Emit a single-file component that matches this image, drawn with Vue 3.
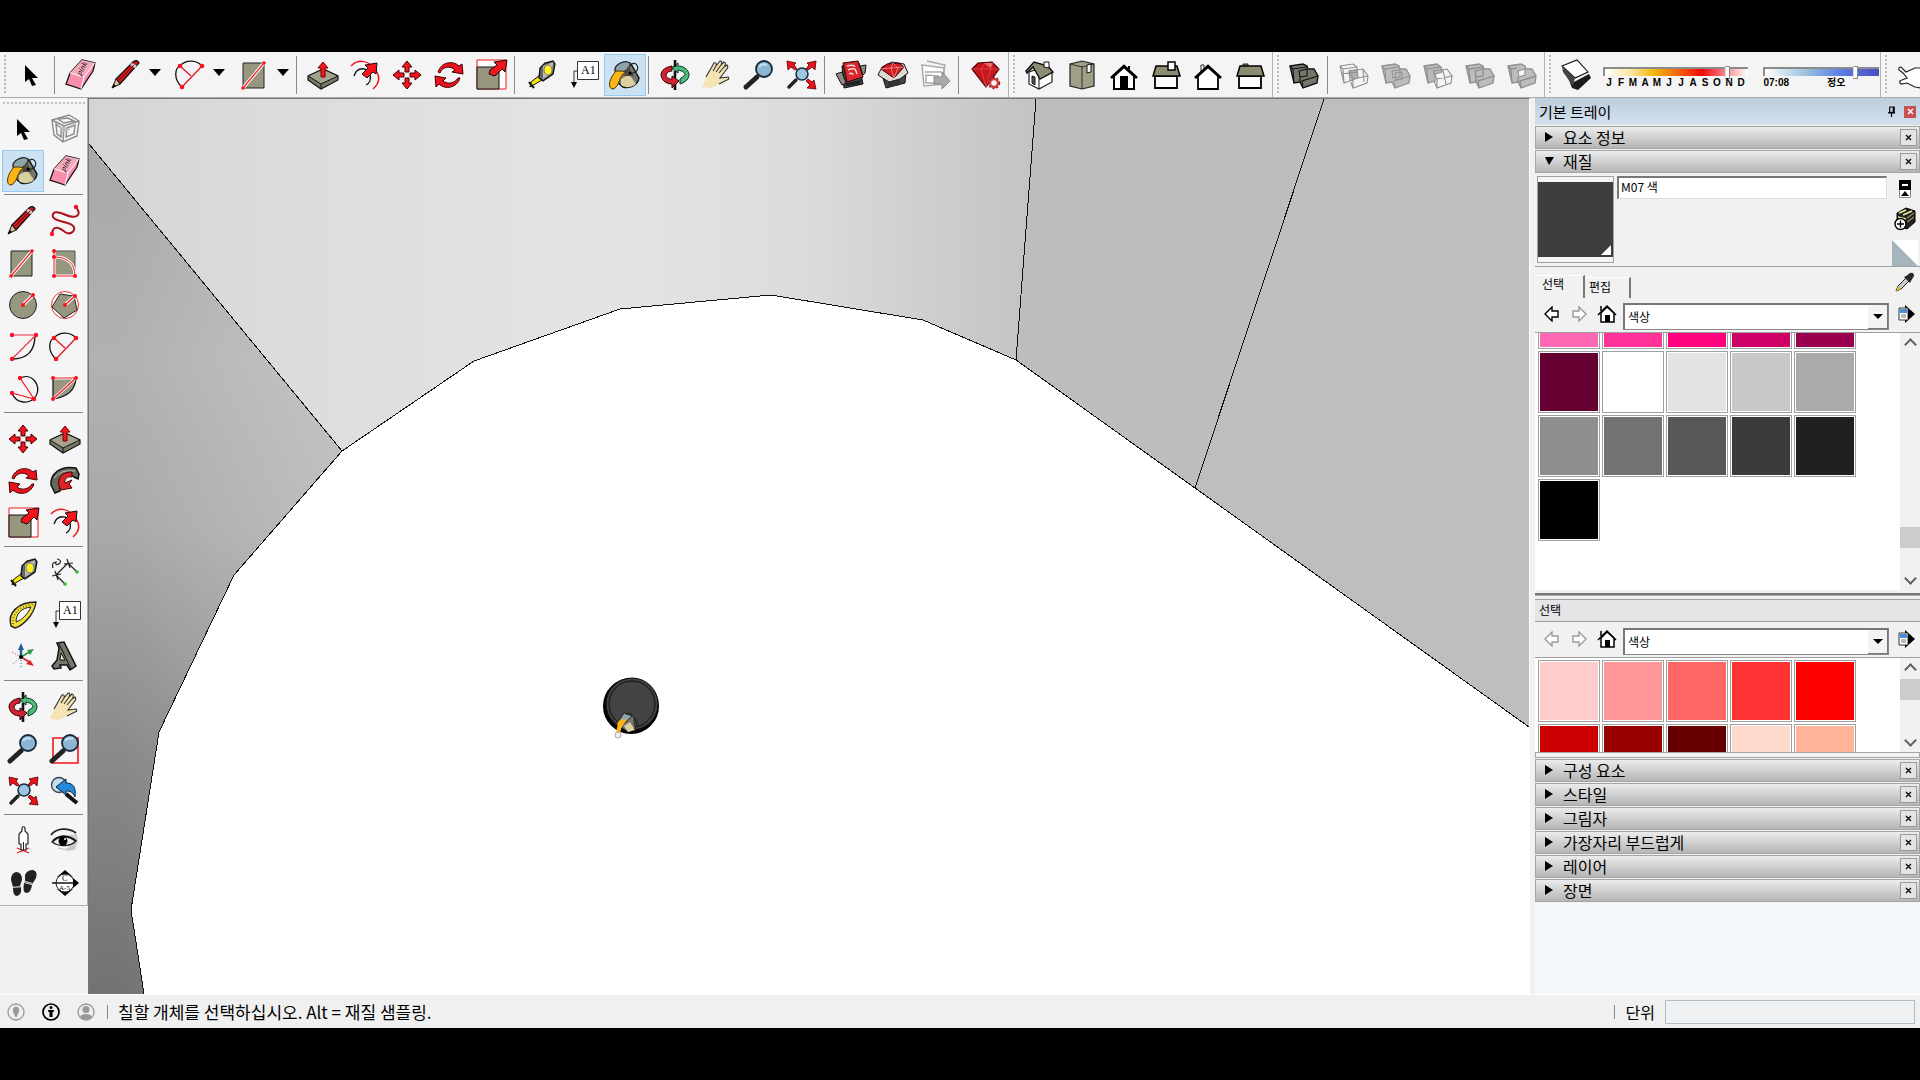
<script setup>
import { ref } from 'vue'

const edit = [
  { id: 'push', label: 'Push/Pull' }, { id: 'offset', label: 'Offset' }, { id: 'move', label: 'Move' },
  { id: 'rotate', label: 'Rotate' }, { id: 'scale', label: 'Scale' }, { sep: true },
  { id: 'tape', label: 'Tape Measure' }, { id: 'label', label: 'Text' }, { id: 'bucket', label: 'Paint Bucket', on: true }, { sep: true },
  { id: 'orbit', label: 'Orbit' }, { id: 'hand', label: 'Pan' }, { id: 'zoom', label: 'Zoom' }, { id: 'extents', label: 'Zoom Extents' }, { sep: true },
  { id: 'warehouse', label: '3D Warehouse' }, { id: 'extwarehouse', label: 'Extension Warehouse' }, { id: 'layout', label: 'Send to LayOut' }, { sep: true },
  { id: 'ruby', label: 'Extension Manager' }
]
const draw = [{ id: 'pencil', label: 'Line' }, { id: 'arc', label: 'Arc' }, { id: 'rect', label: 'Rectangle' }]
const views = [
  { id: 'iso', label: 'Iso' }, { id: 'top', label: 'Top' }, { id: 'front', label: 'Front' },
  { id: 'right', label: 'Right' }, { id: 'back', label: 'Back' }, { id: 'left', label: 'Left' }
]
const solids = [
  { id: 'intersect', label: 'Intersect' }, { id: 'union', label: 'Union' }, { id: 'subtract', label: 'Subtract' },
  { id: 'trim', label: 'Trim' }, { id: 'split', label: 'Split' }
]
const palette = [
  ['cursor', 'component', 'bucket', 'eraser'],
  ['pencil', 'freehand', 'rect', 'rrect', 'circle', 'polygon', 'arc2', 'arc', 'arc3', 'pie'],
  ['move', 'push', 'rotate', 'follow', 'scale', 'offset'],
  ['tape', 'dimension', 'protractor', 'label', 'axes', 'text3d'],
  ['orbit', 'hand', 'zoom', 'zoomwin', 'extents', 'previous'],
  ['person', 'eye', 'feet', 'section']
]
const months = 'JFMAMJJASOND'.split('')
const mainColors = [
  '#ff69b4', '#ff3399', '#ff007f', '#cc0066', '#99004d',
  '#660033', '#ffffff', '#e3e3e3', '#c8c8c8', '#aaaaaa',
  '#8e8e8e', '#727272', '#575757', '#3b3b3b', '#202020', '#000000'
]
const subColors = ['#ffcccc', '#ff9999', '#ff6666', '#ff3333', '#ff0000', '#cc0000', '#990000', '#660000', '#ffd9cc', '#ffb399']
const sections = ['구성 요소', '스타일', '그림자', '가장자리 부드럽게', '레이어', '장면']
const material = ref('M07 색')
const month = ref(87)
const hour = ref(81)
</script>

<template>
  <svg class="sprite" aria-hidden="true">
    <defs>
      <symbol id="cursor" viewBox="0 0 42 42"><path d="M15 11V28L19 25 22 32 26 31 22 24 28 24z" /></symbol>
      <symbol id="eraser" viewBox="0 0 42 42">
        <path d="M22 6 35 9 33 17 21 35 6 30 10 19z" fill="#f98fac" stroke="#111" stroke-width="1.3" />
        <path d="M22 6 35 9 24 23 10 19z" fill="#f6a9bd" /><path d="M10 19 24 23 21 35M24 23 35 9" fill="none" stroke="#fff" />
        <text x="18" y="21" font-size="8" font-family="Liberation Serif" font-style="italic" transform="rotate(-62 20 19)">pink</text>
      </symbol>
      <symbol id="pencil" viewBox="0 0 42 42">
        <path d="M10 25 27 8Q31 5 33 9L14 30z" fill="#d0171c" stroke="#111" stroke-width="1.3" /><path d="M6 34 10 25 14 30z" fill="#d8c28e" stroke="#111" />
        <path d="M25 10 30 13" stroke="#ccc" stroke-width="3" /><path d="M12 27 28 11" stroke="#6f0a0d" /><path d="M6 34 8 30 10 32z" />
      </symbol>
      <symbol id="arc" viewBox="0 0 42 42">
        <path d="M12 33C3 25 5 14 10 12 16 5 27 6 32 12" fill="none" stroke="#111" stroke-width="1.3" /><path d="M12 33 32 12M10 12 21 22" stroke="#e01624" stroke-width="1.3" />
        <g fill="#f5141e"><circle cx="12" cy="33" r="2.3" /><circle cx="32" cy="12" r="2.3" /><circle cx="10" cy="12" r="2.3" /></g>
      </symbol>
      <symbol id="rect" viewBox="0 0 42 42">
        <path d="M9 9H30V34H9z" fill="#97967e" stroke="#222" /><path d="M9 34 30 9" stroke="#fff" stroke-width="3.4" /><path d="M9 34 30 9" stroke="#f5141e" stroke-width="1.2" />
        <g fill="#f5141e"><circle cx="9" cy="34" r="1.8" /><circle cx="30" cy="9" r="1.8" /></g>
      </symbol>
      <symbol id="push" viewBox="0 0 42 42">
        <path d="M6 22 21 15 36 22V26L19 35 6 26z" fill="#7b7a67" stroke="#111" stroke-width="1.2" /><path d="M6 22 21 15 36 22 19 30z" fill="#a3a28c" stroke="#111" />
        <path d="M19 30V35" stroke="#111" /><path d="M21 8 26 14H23V23H19V14H16z" fill="#f5141e" stroke="#700" />
      </symbol>
      <symbol id="offset" viewBox="0 0 42 42">
        <path d="M7 12C14 5 23 6 30 14 36 21 37 28 29 35" fill="none" stroke="#f5141e" stroke-width="1.5" /><path d="M10 22C13 12 24 13 26 21 27 25 26 29 22 31" fill="none" stroke="#111" stroke-width="1.3" />
        <path d="M33 9 32 20 29 18 23 24 18 20 24 14 21 11z" fill="#f5141e" stroke="#111" />
      </symbol>
      <symbol id="move" viewBox="0 0 42 42">
        <path d="M21 7 26 13H23V18H19V13H16zM21 35 26 29H23V24H19V29H16zM7 21 13 16V19H18V23H13V26zM35 21 29 16V19H24V23H29V26z" fill="#f5141e" stroke="#400" />
      </symbol>
      <symbol id="rotate" viewBox="0 0 42 42">
        <path d="M10 18C13 8 25 6 31 12L34 10 35 20 24 18 27 16C22 11 14 13 12 19z" fill="#e8131d" stroke="#400" /><path d="M32 24C29 34 17 36 11 30L8 33 7 22 18 24 15 27C20 31 27 29 30 24z" fill="#e8131d" stroke="#400" />
      </symbol>
      <symbol id="scale" viewBox="0 0 42 42">
        <path d="M7 6H36V35H7z" fill="#fff" stroke="#f5141e" /><path d="M7 13H29V35H7z" fill="#97967e" stroke="#111" /><path d="M37 6 35 18 32 15 25 22 19 20 20 16 27 11 24 8z" fill="#f5141e" stroke="#111" />
      </symbol>
      <symbol id="tape" viewBox="0 0 42 42">
        <path d="M20 21 11 28 10 33 22 26z" fill="#f4e400" stroke="#111" /><path d="M20 14 25 9 33 7 35 10 33 20 23 27 19 24z" fill="#666" stroke="#111" stroke-width="1.3" />
        <path d="M23 12 33 8 32 19 23 25z" fill="#b9b9b9" /><ellipse cx="28" cy="16" rx="4" ry="5" fill="#fff21c" stroke="#777" /><path d="M9 28 14 34" stroke="#111" stroke-width="2" />
      </symbol>
      <symbol id="label" viewBox="0 0 42 42">
        <path d="M15.500 7.500H36.500V25.500H15.500z" fill="#fff" stroke="#333" /><text x="19" y="20" font-size="12" font-family="Liberation Serif">A1</text>
        <path d="M15 17H12V30" fill="none" stroke="#333" /><path d="M9 28H15L12 34z" />
      </symbol>
      <symbol id="bucket" viewBox="0 0 42 42">
        <path d="M12 14 27 10 35 24C34 31 26 35 19 33L14 29z" fill="#77766a" stroke="#111" stroke-width="1.400" /><path d="M17 25 25 20 32 30C27 34 21 34 17 31z" fill="#d9cf9f" />
        <path d="M11 17C10 11 20 5 26 9 27 14 20 19 15 19z" fill="#8da3a8" stroke="#222" stroke-width="1.3" /><path d="M24 12 30 22 20 22z" fill="#4b4b45" />
        <path d="M12 17C17 17 20 17 22 18 15 20 16 33 9 35 4 35 4 26 12 17z" fill="#fdb515" stroke="#4d3400" />
        <path d="M26 11C32 6 36 13 32 18L26 20" fill="none" stroke="#222" stroke-width="1.2" /><circle cx="26" cy="19" r="1.5" />
      </symbol>
      <symbol id="orbit" viewBox="0 0 42 42">
        <path d="M18 12C12 13 7 16 7 21 8 28 14 30 18 30V34L25 27 18 22V25C14 25 12 23 12 21 13 18 15 17 18 17z" fill="#cf2233" stroke="#300" /><path d="M24 12V9L18 14 24 19V16C29 17 31 19 31 21L26 25 26 30C32 28 35 25 35 20 34 15 29 12 24 12z" fill="#4fb97a" stroke="#032" />
        <path d="M21 6V13M21 17V24M21 30V36" stroke="#111" stroke-width="2.6" />
      </symbol>
      <symbol id="hand" viewBox="0 0 42 42">
        <path d="M6 33 12 19 18 9Q21 8 20 12L24 7Q27 7 25 11L28 8Q31 9 28 13L31 11Q33 13 30 16L25 23 32 23Q34 25 31 26L23 30 15 34z" fill="#f5e2b5" /><path d="M10 23 18 9Q21 8 20 12L17 17M20 12 24 7Q27 7 25 11L20 18M25 11 28 8Q31 9 28 13L23 19M28 13 31 11Q33 13 30 16L24 24 32 23Q34 25 31 26L23 30" fill="none" stroke="#333" stroke-width="1.1" />
      </symbol>
      <symbol id="zoom" viewBox="0 0 42 42">
        <path d="M8 33 19 23" stroke="#222" stroke-width="5" stroke-linecap="round" /><circle cx="26" cy="15" r="8" fill="#8db6d4" stroke="#16293b" stroke-width="1.8" /><path d="M21 13Q24 9 29 11" stroke="#c7e2f4" stroke-width="2" fill="none" />
      </symbol>
      <symbol id="extents" viewBox="0 0 42 42">
        <path d="M9 33 16 26" stroke="#222" stroke-width="3.500" stroke-linecap="round" /><circle cx="22" cy="20" r="6" fill="#9cc5e2" stroke="#16293b" stroke-width="1.5" />
        <path d="M7 7 16 9 14 11 17 15 15 16 11 13 8 16zM36 7 27 9 29 11 26 15 28 16 32 13 35 16zM36 35 34 26 32 28 28 25 26 27 30 31 27 34z" fill="#e8131d" stroke="#500" stroke-width=".8" />
      </symbol>
      <symbol id="warehouse" viewBox="0 0 42 42">
        <path d="M12 12 29 9 33 30 14 34z" fill="#444" stroke="#111" /><path d="M6 20 12 18 16 29 12 31z" fill="#8f8c85" stroke="#111" /><path d="M13 9 28 7 33 23 17 28z" fill="#d9272c" stroke="#300" />
        <path d="M17 12Q24 10 25 13M18 16Q25 13 26 17L27 20M19 20Q22 18 23 21" fill="none" stroke="#ffd9d6" stroke-width="1.4" /><path d="M30 12 36 11 35 19 33 21z" fill="#8f8c85" stroke="#111" /><path d="M16 29 31 26 30 30 16 32z" fill="#222" />
      </symbol>
      <symbol id="extwarehouse" viewBox="0 0 42 42">
        <path d="M11 24 14 34 33 29 34 18z" fill="#444" stroke="#111" /><path d="M10 13 6 21 17 28 28 25 36 19 32 10 20 8z" fill="#dedbd4" stroke="#111" /><path d="M9 15 15 10 27 9 32 13 22 24z" fill="#cf1b21" stroke="#300" />
        <path d="M9 15 19 14 32 13M19 14 22 24 26 14 21 9 19 14" fill="none" stroke="#f79a98" stroke-width=".8" /><path d="M16 28 28 25V31L16 33z" fill="#333" />
      </symbol>
      <symbol id="layout" viewBox="0 0 42 42">
        <path d="M8 11 30 14V30L10 32z" fill="#fff" stroke="#aaa" stroke-width="1.5" /><path d="M13 7 31 11 28 27M11 18H28M12 21 24 22V29H12z" fill="none" stroke="#aaa" stroke-width="1.5" /><path d="M20 23H28V18L36 27 28 35V30H20z" fill="#aaa" stroke="#888" />
      </symbol>
      <symbol id="ruby" viewBox="0 0 42 42">
        <path d="M8 15 14 9 28 8 35 15 22 33z" fill="#c9151c" stroke="#400" stroke-width="1.2" /><path d="M8 15 17 15 35 15M17 15 22 33 27 15 21 9 17 15" fill="none" stroke="#e04a4a" stroke-width=".8" /><path d="M20 9 29 9 27 14z" fill="#ee6868" />
        <circle cx="30" cy="29" r="4" fill="#f4f4f4" stroke="#d63a3f" stroke-width="2.4" /><circle cx="30" cy="29" r="5.500" fill="none" stroke="#8e2326" stroke-width="1.5" stroke-dasharray="2 2" />
      </symbol>
      <symbol id="iso" viewBox="0 0 42 42">
        <path d="M10 18V30L20 35 33 28V18L28 12z" fill="#fff" stroke="#222" stroke-width="1.2" /><path d="M7 17 15 8 29 12 34 18 21 25 14 13 8 19z" fill="#8d8c73" stroke="#111" stroke-width="1.4" /><path d="M20 24V35M13 22 16 23V31L13 29z" stroke="#111" fill="#555" /><path d="M25 8H30V14L25 13z" fill="#fff" stroke="#111" />
      </symbol>
      <symbol id="top" viewBox="0 0 42 42">
        <path d="M9 10 21 7 33 10V32L21 35 9 32z" fill="#a09f87" stroke="#222" stroke-width="1.2" /><path d="M21 12V35M9 10 21 13 33 10" fill="none" stroke="#333" /><path d="M26 11 30 10V18L26 19z" fill="#fff" stroke="#111" />
      </symbol>
      <symbol id="front" viewBox="0 0 42 42"><path d="M11 22V35H31V22L21 13z" fill="#fff" stroke="#000" stroke-width="2" /><path d="M8 24 21 12 34 24" fill="none" stroke="#000" stroke-width="2.6" /><path d="M17 22H25V35H17z" /><path d="M25 12H27V15H25z" /></symbol>
      <symbol id="right" viewBox="0 0 42 42"><path d="M10 22H32V34H10z" fill="#fff" stroke="#000" stroke-width="1.800" /><path d="M11 12H32L35 22H8z" fill="#8d8c73" stroke="#000" stroke-width="1.5" /><path d="M23 8H30V16H23z" fill="#fff" stroke="#000" stroke-width="1.5" /></symbol>
      <symbol id="back" viewBox="0 0 42 42"><path d="M14 18V11H17V15" fill="#fff" stroke="#222" /><path d="M11 22V35H31V22L21 13z" fill="#fff" stroke="#000" stroke-width="1.800" /><path d="M8 24 21 12 34 24" fill="none" stroke="#000" stroke-width="2.6" /></symbol>
      <symbol id="left" viewBox="0 0 42 42"><path d="M14 10H19V13H14z" fill="#777" stroke="#222" /><path d="M10 22H32V34H10z" fill="#fff" stroke="#000" stroke-width="1.800" /><path d="M11 12H32L35 22H8z" fill="#8d8c73" stroke="#000" stroke-width="1.5" /></symbol>
      <symbol id="shell" viewBox="0 0 42 42"><path d="M7 12 20 10 24 12 25 15 31 15 35 22 34 29 20 34 17 28 11 29z" fill="#77766a" stroke="#111" stroke-width="1.400" /><path d="M7 12 10 15 24 13M10 15 11 29M16 17 24 15V22L17 23zM17 23V28M20 34 19 27 35 22" fill="none" stroke="#111" stroke-width="1.100" /></symbol>
      <symbol id="intersect" viewBox="0 0 42 42"><path d="M16 16 25 15 25 24 18 26z" fill="#b0b0b0" /><path d="M7 12 20 10 24 13 25 24 11 29zM7 12 10 15 24 13M10 15 11 29M16 17 30 15 35 22 34 29 20 34 17 26zM16 17 20 25 35 22M20 25V34M30 15 31 28M8 20 24 18" fill="none" stroke="#8f8f8f" stroke-width="1.1" /></symbol>
      <symbol id="union" viewBox="0 0 42 42"><path d="M7 12 20 10 24 12 25 15 31 15 35 22 34 29 20 34 17 28 11 29z" fill="#bcbcbc" stroke="#919191" stroke-width="1.300" /><path d="M7 12 10 15 24 13M10 15 11 29M17 17 25 16V23L18 24zM20 19 27 18V25L21 26zM20 34 19 27 35 22" fill="none" stroke="#8f8f8f" /></symbol>
      <symbol id="subtract" viewBox="0 0 42 42"><path d="M7 12 20 10 24 13 25 18 18 20 18 27 11 29z" fill="#b8b8b8" stroke="#919191" stroke-width="1.300" /><path d="M7 12 10 15 24 13M10 15 11 29M16 17 30 15 35 22 34 29 20 34 17 27M20 25 35 22M20 25V34M26 16 29 30M16 17 20 25" fill="none" stroke="#8f8f8f" stroke-width="1.100" /></symbol>
      <symbol id="trim" viewBox="0 0 42 42"><path d="M7 12 20 10 24 12 25 15 31 15 35 22 34 29 20 34 17 28 11 29z" fill="#bcbcbc" stroke="#919191" stroke-width="1.300" /><path d="M7 12 10 15 24 13M10 15 11 29M16 17 24 15V22L17 23zM17 23V28M20 34 19 27 35 22" fill="none" stroke="#888" stroke-width="1.200" /></symbol>
      <symbol id="split" viewBox="0 0 42 42"><path d="M7 12 20 10 24 12 25 15 31 15 35 22 34 29 20 34 17 28 11 29z" fill="#bcbcbc" stroke="#919191" stroke-width="1.300" /><path d="M17 17 24 15V21L18 23z" fill="#f6f6f6" stroke="#888" /><path d="M7 12 10 15 16 14M10 15 11 29M17 23V28M20 34 19 27 35 22" fill="none" stroke="#888" stroke-width="1.200" /></symbol>
      <symbol id="shadow" viewBox="0 0 42 42"><path d="M9 13 19 28 34 20 36 24 23 36 17 34z" fill="#1a1a1a" /><path d="M7 12 22 6 33 18 20 24z" fill="#fff" stroke="#111" stroke-width="1.1" /><path d="M7 12 20 24 18 32 8 18z" fill="#444" /></symbol>
      <symbol id="gesture" viewBox="0 0 42 42"><path d="M30 34 24 33 16 29 10 30Q7 27 11 26L16 24 12 19 8 16Q7 13 10 13L15 18 24 14 34 14V34z" fill="#fff" stroke="#222" stroke-width="1.200" /></symbol>
      <symbol id="component" viewBox="0 0 42 42"><path d="M8 12 25 7 35 13 33 28 19 34 10 27zM8 12 20 18 35 13M20 18 19 34M12 16 13 26 17 29 17 20zM23 20 31 17 30 26 22 29zM14 11 24 10 30 13 20 15z" fill="none" stroke="#8b8b8b" stroke-width="1.4" /><path d="M15 18 27 21 18 25z" fill="#bbb" /></symbol>
      <symbol id="freehand" viewBox="0 0 42 42"><path d="M8 34C9 24 16 28 21 32 27 36 34 29 28 25 22 21 12 22 9 17 7 10 16 12 22 15 31 19 39 16 32 7" fill="none" stroke="#a81218" stroke-width="2" /><circle cx="8" cy="34" r="2.2" fill="#f5141e" /><circle cx="32" cy="7" r="2.2" fill="#f5141e" /></symbol>
      <symbol id="rrect" viewBox="0 0 42 42"><path d="M10 9H31V34H10z" fill="#97967e" stroke="#555" /><path d="M10 9V34H31C31 22 24 15 10 15" fill="none" stroke="#fff" stroke-width="3" /><path d="M10 9V34H31C31 22 24 15 10 15" fill="none" stroke="#f5141e" /><g fill="#f5141e"><circle cx="10" cy="9" r="2" /><circle cx="10" cy="15" r="2" /><circle cx="10" cy="34" r="2" /><circle cx="31" cy="34" r="2" /></g></symbol>
      <symbol id="circle" viewBox="0 0 42 42"><circle cx="21" cy="21" r="13.500" fill="#97967e" stroke="#222" /><path d="M21 21 31 11" stroke="#fff" stroke-width="3.500" /><path d="M21 21 31 11" stroke="#f5141e" stroke-width="1.3" /><g fill="#f5141e"><circle cx="21" cy="21" r="2" /><circle cx="31" cy="11" r="2" /></g></symbol>
      <symbol id="polygon" viewBox="0 0 42 42"><circle cx="21" cy="21" r="13.500" fill="#fff" stroke="#e33" /><path d="M8 23 16 10 30 12 33 26 20 34z" fill="#97967e" stroke="#222" /><path d="M21 21 31 12" stroke="#fff" stroke-width="3.500" /><path d="M21 21 31 12" stroke="#f5141e" stroke-width="1.3" /><g fill="#f5141e"><circle cx="21" cy="21" r="2" /><circle cx="31" cy="12" r="2" /></g></symbol>
      <symbol id="arc2" viewBox="0 0 42 42"><path d="M10 33Q33 33 33 9" fill="none" stroke="#111" stroke-width="1.300" /><path d="M10 9H34L10 33" fill="none" stroke="#e3344a" stroke-width="1.2" /><g fill="#f5141e"><circle cx="10" cy="9" r="2.200" /><circle cx="34" cy="9" r="2.200" /><circle cx="10" cy="33" r="2.200" /></g></symbol>
      <symbol id="arc3" viewBox="0 0 42 42"><path d="M18 10C30 4 40 18 34 28 28 37 14 36 10 25" fill="none" stroke="#111" stroke-width="1.3" /><path d="M18 10 32 31 10 25" fill="none" stroke="#f5141e" stroke-width="1.2" /><g fill="#f5141e"><circle cx="18" cy="10" r="2.200" /><circle cx="32" cy="31" r="2.200" /><circle cx="10" cy="25" r="2.200" /></g></symbol>
      <symbol id="pie" viewBox="0 0 42 42"><path d="M9 10H32Q31 28 9 31z" fill="#97967e" stroke="#111" stroke-width="1.200" /><path d="M9 31 32 10H9" fill="none" stroke="#fff" stroke-width="3" /><path d="M9 31 32 10H9" fill="none" stroke="#f5141e" stroke-width="1.2" /><g fill="#f5141e"><circle cx="9" cy="10" r="2" /><circle cx="32" cy="10" r="2" /><circle cx="9" cy="31" r="2" /></g></symbol>
      <symbol id="follow" viewBox="0 0 42 42"><path d="M7 25C6 14 16 5 32 8L35 14 34 19 30 17C24 12 16 17 16 31L11 33z" fill="#66665a" stroke="#111" stroke-width="1.5" /><path d="M10 18Q17 9 31 11" fill="none" stroke="#bbb" /><path d="M15 26C13 17 19 12 28 12L28 17C23 16 20 19 21 23L28 20 25 24 28 28 17 30z" fill="#e0232a" stroke="#400" /></symbol>
      <symbol id="dimension" viewBox="0 0 42 42"><path d="M9 16Q7 11 12 10 11 15 16 11 18 8 13 7M12 23 24 11M11 19 14 28M8 24 17 22M23 7 26 16M20 12 29 11M25 12 32 19M13 24 20 31" fill="none" stroke="#222" stroke-width="1.200" /><g fill="#3cb531"><circle cx="33" cy="20" r="1.800" /><circle cx="21" cy="32" r="1.800" /></g></symbol>
      <symbol id="protractor" viewBox="0 0 42 42"><path d="M34 8C16 8 5 19 9 32L13 34C20 32 32 22 34 8z" fill="#f2de3a" stroke="#222" stroke-width="1.400" /><path d="M14 28C14 20 19 14 29 13 25 21 20 26 14 28z" fill="#f5f5f5" stroke="#222" /><path d="M11 30C10 20 17 12 31 10.500" fill="none" stroke="#7d6e10" stroke-dasharray="1 2" stroke-width="2" /></symbol>
      <symbol id="axes" viewBox="0 0 42 42"><path d="M19 21V11" stroke="#225d9d" stroke-width="2.500" /><path d="M19 7 22 14H16z" fill="#225d9d" /><path d="M19 21 29 15" stroke="#2f9c45" stroke-width="2" /><path d="M32 13 28 19 25 14z" fill="#2f9c45" /><path d="M19 21 29 27" stroke="#d22" stroke-width="2" /><path d="M32 30 24 28 28 24z" fill="#d22" /><path d="M19 21V33M19 21 11 28" stroke="#369" stroke-dasharray="1 2" /><path d="M19 21 10 16" stroke="#d22" stroke-dasharray="1 2" /><circle cx="19" cy="21" r="2" /></symbol>
      <symbol id="text3d" viewBox="0 0 42 42"><path d="M13 7 20 6 32 30 26 34 23 29H16L17 32 10 33 8 30 13 24 15 12z" fill="#77766b" stroke="#111" stroke-width="1.500" /><path d="M15 8 19 16 27 33" fill="none" stroke="#111" /><path d="M17 17 21 24H16z" fill="#eee" stroke="#111" /></symbol>
      <symbol id="zoomwin" viewBox="0 0 42 42"><path d="M9 10H34V35H9z" fill="none" stroke="#f5141e" stroke-width="1.600" /><use href="#zoom" /></symbol>
      <symbol id="previous" viewBox="0 0 42 42"><circle cx="15" cy="15" r="7.500" fill="#c4ddec" stroke="#345" stroke-width="1.300" /><path d="M22 24 33 33" stroke="#111" stroke-width="4" /><path d="M12 17 22 9V13C30 13 32 18 31 27 29 22 26 21 22 21V25z" fill="#2489d8" stroke="#123" /></symbol>
      <symbol id="person" viewBox="0 0 42 42"><path d="M15 33 27 28M27 33 15 28" stroke="#f5141e" stroke-width="1.300" /><path d="M20 8Q21.500 5 23 8L23 11 26 14 26 24H24L24 30H19V24H17V14L20 11z" fill="#fff" stroke="#222" stroke-width="1.200" /><path d="M21.500 22V30" stroke="#222" /></symbol>
      <symbol id="eye" viewBox="0 0 42 42"><path d="M7 15C12 8 24 7 32 13" fill="none" stroke="#222" stroke-width="1.800" /><path d="M24 15 33 14 34 21 31 30 22 31 25 26 31 22z" fill="#ccc" /><path d="M8 22C14 15 23 14 32 21 26 27 15 27 8 22z" fill="#eee" stroke="#222" stroke-width="1.300" /><path d="M9 21C14 16 23 14 32 21" fill="none" stroke="#111" stroke-width="2" /><circle cx="19" cy="21" r="4.500" /><circle cx="21" cy="19" r="1" fill="#fff" /><path d="M14 28Q22 31 30 27" fill="none" stroke="#bbb" /></symbol>
      <symbol id="feet" viewBox="0 0 42 42"><path d="M9 18Q9 11 14 10 20 10 20 18L18 24 11 25zM11 26 19 25Q20 33 15 34 11 34 11 26zM23 13Q25 8 31 8 36 9 34 16L31 21 23 19zM22 21 30 23Q29 30 25 31 20 31 22 21z" fill="#222" /><path d="M11 25H19M22 20 31 22" stroke="#888" /></symbol>
      <symbol id="section" viewBox="0 0 42 42"><path d="M21 8 29 15H13zM21 34 29 27H13z" /><circle cx="21" cy="21" r="9" fill="#fff" stroke="#222" /><path d="M8 21H34" stroke="#111" stroke-width="1.500" /><path d="M29 16 35 21 29 26z" /><text x="18" y="19" font-size="8" font-family="Liberation Serif">C</text><text x="15" y="28" font-size="7" font-family="Liberation Serif">A-5</text></symbol>
      <symbol id="arrowL" viewBox="0 0 16 16"><path d="M1 8 8 1V5H14V11H8V15z" fill="#fff" stroke="currentColor" stroke-width="1.400" /></symbol>
      <symbol id="home" viewBox="0 0 20 20"><path d="M4 9V18H17V9L10 3z" fill="#fff" stroke="#000" stroke-width="1.500" /><path d="M1 11 10 2 19 11M4 7V2" fill="none" stroke="#000" stroke-width="1.500" /><path d="M8 11H13V18H8z" /></symbol>
      <symbol id="details" viewBox="0 0 18 18"><path d="M7 0 17 9 7 18z" /><path d="M1 3H10V15H1z" fill="#fff" stroke="#333" /><path d="M2 4H9V8H2z" fill="#4a8edb" /><path d="M3 10H8M3 12H8" stroke="#777" /><path d="M10 4 16 9 10 14z" /></symbol>
    </defs>
  </svg>

  <div class="app">
    <header class="toolbar">
      <div class="group first">
        <i class="grip"></i>
        <button class="tool" aria-label="Select"><svg><use href="#cursor" /></svg></button>
        <i class="sep"></i>
        <div class="splits">
          <button class="tool" aria-label="Eraser"><svg><use href="#eraser" /></svg></button>
          <div v-for="d in draw" :key="d.id" class="splitbtn">
            <button class="tool" :aria-label="d.label"><svg><use :href="'#' + d.id" /></svg></button>
            <button class="drop" :aria-label="d.label + ' menu'"></button>
          </div>
        </div>
        <i class="sep"></i>
        <template v-for="(t, i) in edit" :key="i">
          <i v-if="t.sep" class="sep"></i>
          <button v-else class="tool" :class="{ on: t.on }" :aria-label="t.label"><svg><use :href="'#' + t.id" /></svg></button>
        </template>
      </div>
      <div class="group">
        <i class="grip"></i>
        <button v-for="t in views" :key="t.id" class="tool" :aria-label="t.label"><svg><use :href="'#' + t.id" /></svg></button>
      </div>
      <div class="group">
        <i class="grip"></i>
        <button class="tool" aria-label="Outer Shell"><svg><use href="#shell" /></svg></button>
        <i class="sep"></i>
        <button v-for="t in solids" :key="t.id" class="tool" :aria-label="t.label"><svg><use :href="'#' + t.id" /></svg></button>
      </div>
      <div class="group shadows">
        <i class="grip"></i>
        <button class="tool" aria-label="Shadows"><svg><use href="#shadow" /></svg></button>
        <label class="slider date">
          <input v-model="month" type="range" aria-label="Date" />
          <span class="months"><b v-for="(m, i) in months" :key="i">{{ m }}</b></span>
        </label>
        <label class="slider time">
          <input v-model="hour" type="range" aria-label="Time" />
          <span class="hours"><b>07:08</b><b>정오</b></span>
        </label>
      </div>
      <div class="group last">
        <i class="grip"></i>
        <button class="tool" aria-label="Interact"><svg><use href="#gesture" /></svg></button>
      </div>
    </header>

    <main class="main">
      <aside class="palette">
        <i class="hgrip"></i>
        <div v-for="(g, i) in palette" :key="i" class="pgroup">
          <button v-for="t in g" :key="t" class="tool" :class="{ on: t === 'bucket' }" :aria-label="t"><svg><use :href="'#' + t" /></svg></button>
        </div>
      </aside>

      <section class="canvas">
        <svg class="scene" viewBox="89 99 1440 895" preserveAspectRatio="none">
          <defs>
            <linearGradient id="gl" gradientUnits="userSpaceOnUse" x1="130" y1="150" x2="130" y2="994">
              <stop offset="0" stop-color="#a9a9a9" /><stop offset=".25" stop-color="#b1b1b1" /><stop offset=".45" stop-color="#a9a9a9" /><stop offset=".7" stop-color="#8c8b8c" /><stop offset="1" stop-color="#737273" />
            </linearGradient>
            <linearGradient id="gs" gradientUnits="userSpaceOnUse" x1="120" y1="0" x2="342" y2="0">
              <stop offset="0" stop-color="#fff" stop-opacity="0" /><stop offset="1" stop-color="#fff" stop-opacity=".25" />
            </linearGradient>
            <linearGradient id="gc" gradientUnits="userSpaceOnUse" x1="89" y1="0" x2="1036" y2="0">
              <stop offset="0" stop-color="#d4d4d4" /><stop offset=".2" stop-color="#dcdcdc" /><stop offset=".55" stop-color="#e5e4e5" /><stop offset=".75" stop-color="#dddcdd" /><stop offset="1" stop-color="#c3c3c3" />
            </linearGradient>
          </defs>
          <path d="M89 99H1529V994H89z" fill="#fff" />
          <path d="M89 144 342 451 234 575 159 732 131 910 144 994H89z" fill="url(#gl)" />
          <path d="M89 144 342 451 234 575 159 732 131 910 144 994H89z" fill="url(#gs)" />
          <path d="M89 99H1036L1016 360 923 320 771 295 620 309 474 361 342 451 89 144z" fill="url(#gc)" />
          <path d="M1036 99H1324L1195 488 1016 360z" fill="#bebdbe" />
          <path d="M1324 99H1529V727L1195 488z" fill="#bfbebf" />
          <path d="M89 144 342 451M144 994 131 910 159 732 234 575 342 451 474 361 620 309 771 295 923 320 1016 360 1195 488 1529 727M1036 99 1016 360M1324 99 1195 488" fill="none" stroke="#111" shape-rendering="crispEdges" />
          <circle cx="631" cy="706" r="27" fill="#050505" stroke="#000" stroke-width="2" /><circle cx="632" cy="704" r="26" fill="#414042" stroke="#111" /><circle cx="632" cy="704" r="23" fill="#434244" stroke="#111" />
          <path d="M620 720Q624 712 631 714L637 721Q636 732 628 732L622 728z" fill="#77766a" stroke="#111" /><path d="M624 726 630 722 635 730 628 732z" fill="#d9cf9f" /><path d="M618 722 624 713 632 716 626 722z" fill="#8da3a8" stroke="#222" />
          <path d="M618 722Q621 718 627 720 622 724 620 733L616 734z" fill="#fdb515" /><path d="M633 716 638 720 634 727z" fill="#333" /><circle cx="618" cy="735" r="3" fill="#eee" stroke="#aaa" />
        </svg>
      </section>

      <aside class="tray">
        <div class="title"><h1>기본 트레이</h1>
          <svg class="pin" viewBox="0 0 10 12"><path d="M3 1H8V7H3zM1 7.500H9M5 7V12M7 1V7" fill="none" stroke="#000" stroke-width="1.300" /></svg>
          <button class="close red" aria-label="Close"><svg viewBox="0 0 7 7"><path d="M1 1 6 6M6 1 1 6" /></svg></button>
        </div>
        <div class="section"><button class="head"><i class="tri"></i>요소 정보</button><button class="close" aria-label="Close"><svg viewBox="0 0 7 7"><path d="M1 1 6 6M6 1 1 6" /></svg></button></div>
        <div class="section"><button class="head"><i class="tri down"></i>재질</button><button class="close" aria-label="Close"><svg viewBox="0 0 7 7"><path d="M1 1 6 6M6 1 1 6" /></svg></button></div>

        <div class="material">
          <div class="preview"><i></i></div>
          <input v-model="material" class="name" aria-label="Material name" />
          <div class="side">
            <button aria-label="Secondary pane"><svg width="12" height="18" viewBox="0 0 12 18"><path d="M.5.5H11.500V17.500H.5z" fill="#fff" stroke="#888" /><path d="M0 0H12V10H0zM6 11 10 16H2z" /><path d="M3 5H9" stroke="#fff" stroke-width="2" /></svg></button>
            <button aria-label="Create material"><svg width="22" height="24" viewBox="0 0 22 24"><path d="M3 6 12 1 21 4V15L13 22 3 18z" fill="#24231c" stroke="#000" /><path d="M5 6 12 3M9 8 18 4M4 10 12 12" stroke="#e8e3a8" stroke-width="1.800" /><path d="M13 11 20 6M13 15 20 10" stroke="#8f8c62" stroke-width="1.400" /><circle cx="6.500" cy="17" r="5.500" fill="#fff" stroke="#000" stroke-width="1.400" /><path d="M3 17H10M6.500 13.500V20.500" stroke="#000" stroke-width="1.400" /></svg></button>
            <button aria-label="Default material"><svg width="26" height="26" viewBox="0 0 26 26"><path d="M0 0H26V26H0z" fill="#fff" /><path d="M0 0 26 26H0z" fill="#a6b5bb" /></svg></button>
          </div>
        </div>

        <div class="tabs">
          <button class="tab active">선택</button><button class="tab">편집</button>
          <button class="dropper" aria-label="Sample paint"><svg width="20" height="20" viewBox="0 0 20 20"><path d="M1 19 3 14 11 6 14 9 6 17z" fill="#ccc" stroke="#222" /><path d="M1 19 3 14 6 17z" fill="#e1b91f" /><path d="M9 5 11 4 15 1Q19 0 19 4L16 9 15 11z" fill="#2b2930" /></svg></button>
        </div>
        <div class="nav">
          <button class="ar" aria-label="Back"><svg><use href="#arrowL" /></svg></button>
          <button class="ar fwd dim" aria-label="Forward"><svg><use href="#arrowL" /></svg></button>
          <button class="home" aria-label="In model"><svg><use href="#home" /></svg></button>
          <div class="combo"><select aria-label="Collection"><option>색상</option></select><i></i></div>
          <button class="details" aria-label="Details"><svg><use href="#details" /></svg></button>
        </div>
        <div class="list big">
          <div class="swatches scrolled"><button v-for="c in mainColors" :key="c" class="swatch" :aria-label="c"><i :style="{ background: c }"></i></button></div>
          <div class="bar"><button class="up" aria-label="Up"></button><i class="thumb"></i><button class="dn" aria-label="Down"></button></div>
        </div>
        <i class="splitter"></i>
        <h2 class="sub">선택</h2>
        <div class="nav second">
          <button class="ar dim" aria-label="Back"><svg><use href="#arrowL" /></svg></button>
          <button class="ar fwd dim" aria-label="Forward"><svg><use href="#arrowL" /></svg></button>
          <button class="home" aria-label="In model"><svg><use href="#home" /></svg></button>
          <div class="combo"><select aria-label="Collection"><option>색상</option></select><i></i></div>
          <button class="details" aria-label="Details"><svg><use href="#details" /></svg></button>
        </div>
        <div class="list small">
          <div class="swatches"><button v-for="c in subColors" :key="c" class="swatch" :aria-label="c"><i :style="{ background: c }"></i></button></div>
          <div class="bar"><button class="up" aria-label="Up"></button><i class="thumb"></i><button class="dn" aria-label="Down"></button></div>
        </div>
        <i class="rule"></i>
        <div v-for="s in sections" :key="s" class="section"><button class="head"><i class="tri"></i>{{ s }}</button><button class="close" aria-label="Close"><svg viewBox="0 0 7 7"><path d="M1 1 6 6M6 1 1 6" /></svg></button></div>
        <div class="rest"></div>
      </aside>
    </main>

    <footer class="status">
      <svg viewBox="0 0 18 18"><circle cx="9" cy="9" r="8" fill="none" stroke="#999" stroke-width="1.300" /><path d="M9 15 6 9Q5 4 9 3.500 13 4 12 9z" fill="#999" /></svg>
      <svg viewBox="0 0 18 18"><circle cx="9" cy="9" r="8" fill="none" stroke="#000" stroke-width="1.700" /><circle cx="9" cy="4.500" r="1.500" /><path d="M6 7H12V8.500L10.500 9V14H7.500V9L6 8.500z" /></svg>
      <svg viewBox="0 0 18 18"><circle cx="9" cy="9" r="8" fill="#eee" stroke="#999" stroke-width="1.300" /><circle cx="9" cy="6.500" r="3.500" fill="#999" /><path d="M3 15Q3 11 9 11 15 11 15 15 9 19 3 15z" fill="#999" /></svg>
      <i class="vbar"></i>
      <span class="hint">칠할 개체를 선택하십시오. Alt = 재질 샘플링.</span>
      <i class="vbar end"></i>
      <label for="units">단위</label>
      <input id="units" type="text" />
    </footer>
  </div>
</template>

<style>
body { background: #000; }
</style>

<style scoped>
.sprite { position: absolute; width: 0; height: 0; }
.app { box-sizing: border-box; display: flex; flex-direction: column; min-height: 100vh; padding: 52px 0; background: #000; color: #000; font-family: "Noto Sans CJK KR", "Noto Sans", sans-serif; font-weight: 400; overflow: hidden; }
.app * { box-sizing: border-box; }
button { margin: 0; padding: 0; border: 0; background: none; font: inherit; color: inherit; }
i { display: block; flex: none; }
svg { display: block; }

.toolbar { display: flex; height: 46px; background: #f4f4f4; border-bottom: 1px solid #a9a9a9; overflow: hidden; }
.group { display: flex; flex: none; padding: 2px 1px 0 0; border-left: 1px solid #b4b4b4; }
.group.first { border-left: 0; padding-right: 2px; }
.group.last { flex: 1; }
.grip { width: 10px; height: 40px; margin-top: 1px; background: repeating-linear-gradient(#b9b9b9 0 2px, transparent 2px 4px) 4px 0 / 2px 100% no-repeat; }
.tool { flex: none; width: 42px; height: 42px; border: 1px solid transparent; }
.tool svg { width: 42px; height: 42px; margin: -1px; }
.tool.on { background: #cbe1f4; border-color: #96cbef; }
.sep { width: 1px; height: 38px; margin: 2px 5px 0 2px; background: #8a8a8a; }
.splits { display: flex; gap: 4px; }
.splitbtn { display: flex; }
.drop { width: 18px; padding-right: 4px; display: flex; justify-content: center; align-items: center; }
.drop::before { content: ""; border: 6px solid transparent; border-top: 7px solid #000; border-bottom: 0; margin-bottom: 6px; }
.shadows { width: 336px; }
.slider { position: relative; display: block; margin-top: 13px; }
.date { width: 146px; margin-left: 6px; }
.time { width: 116px; margin-left: 15px; }
.slider input { appearance: none; display: block; width: 100%; height: 9px; margin: 0; border-top: 2px solid #8b8b8b; border-left: 2px solid #8b8b8b; }
.date input { background: linear-gradient(90deg, #fff, #fbe6a0 18%, #f2b80c 34%, #f26b10 50%, #f00808 68%, #fff 100%); }
.time input { background: linear-gradient(90deg, #fff, #9cc3dc 35%, #5b80e8 65%, #4a4fc0); }
.slider input::-webkit-slider-thumb { appearance: none; width: 5px; height: 13px; background: #fff; border: 1px solid #888; border-left-color: #ddd; }
.slider b { font: 700 10px/13px "Liberation Sans", "Noto Sans CJK KR", sans-serif; }
.months { display: grid; grid-template-columns: repeat(12, 12px); text-align: center; }
.hours { display: flex; gap: 38px; }

.main { display: flex; flex: 1; min-height: 896px; background: #f1f1f2; }
.palette { width: 88px; align-self: flex-start; padding: 0 1px 1px 2px; background: #f5f5f5; border-right: 1px solid #b0b0b0; border-bottom: 1px solid #b0b0b0; }
.hgrip { height: 10px; background: repeating-linear-gradient(90deg, #c0c0c0 0 2px, transparent 2px 4px) 1px 4px / 82px 2px no-repeat; }
.pgroup { display: grid; grid-template-columns: 42px 42px; }
.pgroup + .pgroup { position: relative; padding-top: 8px; }
.pgroup + .pgroup::before { content: ""; position: absolute; left: 2px; right: 3px; top: 2px; height: 1px; background: #858585; }
.canvas { position: relative; flex: 1; min-width: 0; border-top: 1px solid #777; border-left: 1px solid #777; border-right: 1px solid #fff; }
.scene { position: absolute; inset: 0; width: 100%; height: 100%; }

.tray { display: flex; flex-direction: column; width: 390px; padding-left: 5px; background: #f1f1f2; font-size: 12px; line-height: 16px; }
.title { display: flex; align-items: center; height: 27px; margin-bottom: 1px; padding: 0 4px; background: linear-gradient(#bccddd, #d3e1ee); }
.title h1 { flex: 1; margin: 0; font-size: 15px; font-weight: 400; line-height: 24px; }
.pin { width: 9px; height: 11px; margin-right: 8px; }
.section { display: flex; align-items: center; height: 23px; margin-bottom: 1px; padding-right: 2px; border: 1px solid #a5a5a5; background: linear-gradient(#ececec, #b5b5b5); flex: none; }
.head { display: flex; align-items: center; flex: 1; height: 21px; padding: 0 0 1px 9px; font-size: 16px; line-height: 20px; text-align: left; }
.tri { width: 18px; height: 10px; background: #000; clip-path: polygon(0 0, 8px 5px, 0 10px); }
.tri.down { height: 8px; clip-path: polygon(0 0, 9px 0, 4px 8px); }
.close { display: flex; align-items: center; justify-content: center; width: 17px; height: 17px; border: 1px solid #999; background: #e3e4e4; }
.close svg { width: 7px; height: 7px; fill: none; stroke: #111; stroke-width: 1.4; }
.close.red { width: 12px; height: 12px; border: 0; background: #c75050; }
.close.red svg { stroke: #fff; }
.material { display: flex; height: 93px; padding: 2px 2px 0; border-bottom: 1px solid #a0a0a0; }
.preview { display: flex; align-items: flex-end; justify-content: flex-end; width: 77px; height: 87px; border: 1px solid #a0a0a0; background: linear-gradient(#f4f4f4 5px, #3d3c3e 5px 80px, #f4f4f4 80px); }
.preview i { width: 10px; height: 10px; margin: 0 2px 7px 0; background: #fff; clip-path: polygon(100% 0, 100% 100%, 0 100%); }
.name { flex: 1; min-width: 0; height: 23px; margin: 0 4px 0 3px; padding: 0 2px 3px; border: 1px solid #ddd; border-top: 2px solid #777; border-left: 2px solid #777; font: inherit; color: #000; background: #fff; }
.side { display: flex; flex-direction: column; align-items: center; gap: 9px; width: 27px; padding-top: 4px; }
.tabs { display: flex; align-items: flex-end; height: 31px; padding-top: 7px; }
.tab { width: 46px; height: 21px; padding: 0 14px 3px 0; border-top: 1px solid #fff; border-right: 2px solid #777; line-height: 16px; }
.tab.active { width: 50px; height: 23px; padding: 0 12px 7px 0; }
.dropper { margin: 0 5px 6px auto; }
.nav { display: flex; align-items: center; height: 35px; padding: 2px 4px 0 9px; border-bottom: 1px solid #a0a0a0; flex: none; }
.nav.second { height: 36px; padding-top: 3px; }
.ar { width: 16px; height: 16px; margin: 0 11px 4px 0; }
.ar svg { width: 16px; height: 16px; }
.fwd svg { transform: scaleX(-1); }
.dim { color: #999; }
.home { width: 20px; height: 20px; margin: 0 6px 4px -1px; }
.home svg { width: 20px; height: 20px; }
.combo { display: flex; flex: 1; height: 27px; border: 1px solid #888; border-top: 2px solid #777; border-left: 2px solid #777; background: #fff; }
.combo select { appearance: none; flex: 1; min-width: 0; border: 0; padding: 0 3px; background: #fff; font: inherit; color: #000; }
.combo i { display: flex; align-items: center; justify-content: center; width: 20px; background: #f3f3f3; border-right: 1px solid #777; border-bottom: 1px solid #777; }
.combo i::before { content: ""; border: 5px solid transparent; border-top-color: #000; border-bottom: 0; }
.details { width: 18px; height: 18px; margin: 0 0 4px 9px; }
.details svg { width: 18px; height: 18px; }
.list { display: flex; background: #fff; overflow: hidden; flex: none; }
.list.big { height: 257px; }
.list.small { height: 94px; }
.swatches { display: flex; flex: 1; flex-wrap: wrap; align-content: flex-start; gap: 2px; padding: 2px 3px; }
.scrolled { margin-top: -48px; }
.swatch { width: 62px; height: 62px; padding: 1px; border: 1px solid #a0a0a0; background: #fff; }
.swatch i { width: 58px; height: 58px; }
.bar { display: flex; flex-direction: column; width: 20px; padding: 2px 0; background: #f1f1f1; }
.bar button { display: flex; align-items: center; justify-content: center; height: 19px; }
.bar button::before { content: ""; width: 7px; height: 7px; border: solid #606060; border-width: 2px 0 0 2px; transform: rotate(45deg); }
.bar .dn { margin-top: auto; }
.bar .dn::before { transform: rotate(225deg); }
.thumb { height: 21px; background: #cdcdcd; }
.big .thumb { margin-top: 173px; }
.splitter { height: 3px; margin: 3px 0; background: #777; border-bottom: 1px solid #aaa; }
.sub { height: 23px; margin: 0; padding: 2px 4px; border: solid #a0a0a0; border-width: 1px 0; background: #e5e4e6; font-size: 12px; font-weight: 400; line-height: 16px; flex: none; }
.rule { height: 6px; margin: 0 0 1px; border: 1px solid #a5a5a5; }
.rest { flex: 1; background: #f5f8fd; }

.status { display: flex; align-items: center; height: 34px; padding: 0 5px 0 7px; border-top: 1px solid #fff; background: #f0f0f0; }
.status svg { width: 18px; height: 18px; margin-right: 17px; flex: none; }
.vbar { width: 1px; height: 14px; margin: 0 10px 0 -5px; background: #888; }
.hint { flex: 1; font-size: 17px; line-height: 24px; white-space: nowrap; }
.vbar.end { margin: 0 11px 0 0; }
.status label { font-size: 16px; line-height: 24px; }
.status input { width: 250px; height: 24px; margin-left: 10px; border: 1px solid #b3bac8; background: #eef0f2; }
</style>
